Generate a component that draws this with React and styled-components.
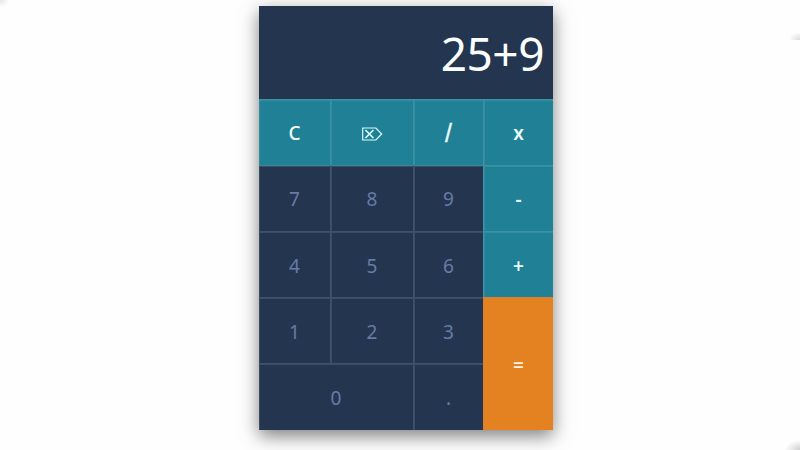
import React from "react";
import styled, { createGlobalStyle, css } from "styled-components";

const GlobalStyle = createGlobalStyle`
  * { box-sizing: border-box; }
  body { margin: 0; background: #fefefe; overflow: hidden; }
`;

const Page = styled.main`
  display: flex;
  justify-content: flex-start;
  width: 800px;
  height: 450px;
  padding: 6px 0 0 259px;
  background:
    radial-gradient(ellipse 10px 7px at 0 0, #e6e6e6, transparent),
    radial-gradient(ellipse 15px 10px at 800px 450px, #cfcfcf, transparent),
    linear-gradient(#fefefe, #fefefe) 0 40px / 100% 380px no-repeat,
    radial-gradient(ellipse 11px 8px at 800px 40px, #dadada, transparent),
    #fefefe;
  font-family: "Noto Sans", "Open Sans", sans-serif;
`;

const Calculator = styled.section`
  display: flex;
  flex-direction: column;
  width: 294px;
  height: 424px;
  background: #24364f;
  box-shadow: 0 6px 17px rgba(0, 0, 0, 0.5);
`;

const Display = styled.output`
  display: flex;
  align-items: center;
  justify-content: flex-end;
  height: 93px;
  padding: 0 9px 0 0;
  color: #fbffff;
  font-size: 46px;
  letter-spacing: -0.5px;
  line-height: 1;
`;

const Keypad = styled.div`
  display: grid;
  flex: 1;
  grid-template-columns: 71px 83px 70px 1fr;
  grid-template-rows: 66px 66px 66px 66px 1fr;
`;

const tones = {
  digit: css`
    background: #24364f;
    color: #657ca6;
    border-color: #40526b;
    box-shadow: inset 1px 1px 0 #3b4d66;
  `,
  operator: css`
    background: #208095;
    color: #edffff;
    border-color: #3b92a3;
    box-shadow: inset 1px 1px 0 #338c9f;
    font-weight: 600;
  `,
  equals: css`
    background: #e48120;
    color: #fff3df;
    border-color: #d58032;
    font-weight: 600;
  `,
};

const Key = styled.button`
  display: flex;
  align-items: center;
  justify-content: center;
  margin: 0;
  padding: ${(p) => (p.$upper ? "1px" : "3px")} 0 0;
  border: 0 solid;
  border-width: 1px 0 0 ${(p) => (p.$first ? 0 : "1px")};
  font: 400 19px/1 "Noto Sans", "Open Sans", sans-serif;
  grid-column: span ${(p) => p.$cols || 1};
  grid-row: span ${(p) => p.$rows || 1};
  ${(p) => tones[p.$tone || "digit"]}
  ${(p) => p.$medium && "font-weight: 500;"}
  ${(p) => p.$underTeal && "border-top-color: #3f8496;"}
`;

const Slash = styled.span`
  font: 400 25px/1 "Liberation Sans", sans-serif;
  -webkit-text-stroke: 0.3px currentColor;
`;

const EraseIcon = styled.svg`
  display: block;
  width: 22px;
  height: 14px;
  margin-top: 1px;
  fill: none;
  stroke: #d8fbff;
`;

const Erase = () => (
  <EraseIcon viewBox="0 0 22 14" aria-label="Delete">
    <path d="M1.7 1H14.9L20.7 7L14.9 13H1.7Z" strokeWidth="1.2" />
    <path d="M4.4 3L12.4 11M12.4 3L4.4 11" strokeWidth="1.7" />
  </EraseIcon>
);

const keys = [
  { label: "C", tone: "operator", first: true, medium: true, upper: true },
  { label: <Erase />, tone: "operator", upper: true },
  { label: <Slash>/</Slash>, tone: "operator", upper: true },
  { label: "x", tone: "operator", upper: true },
  { label: "7", first: true, upper: true, underTeal: true },
  { label: "8", upper: true, underTeal: true },
  { label: "9", upper: true, underTeal: true },
  { label: "-", tone: "operator", upper: true },
  { label: "4", first: true },
  { label: "5" },
  { label: "6" },
  { label: "+", tone: "operator" },
  { label: "1", first: true },
  { label: "2" },
  { label: "3" },
  { label: "=", tone: "equals", rows: 2 },
  { label: "0", first: true, cols: 2 },
  { label: "." },
];

export default function App() {
  return (
    <Page>
      <GlobalStyle />
      <Calculator>
        <Display>25+9</Display>
        <Keypad>
          {keys.map((k, i) => (
            <Key
              key={i}
              $tone={k.tone}
              $first={k.first}
              $cols={k.cols}
              $rows={k.rows}
              $medium={k.medium}
              $upper={k.upper}
              $underTeal={k.underTeal}
            >
              {k.label}
            </Key>
          ))}
        </Keypad>
      </Calculator>
    </Page>
  );
}
